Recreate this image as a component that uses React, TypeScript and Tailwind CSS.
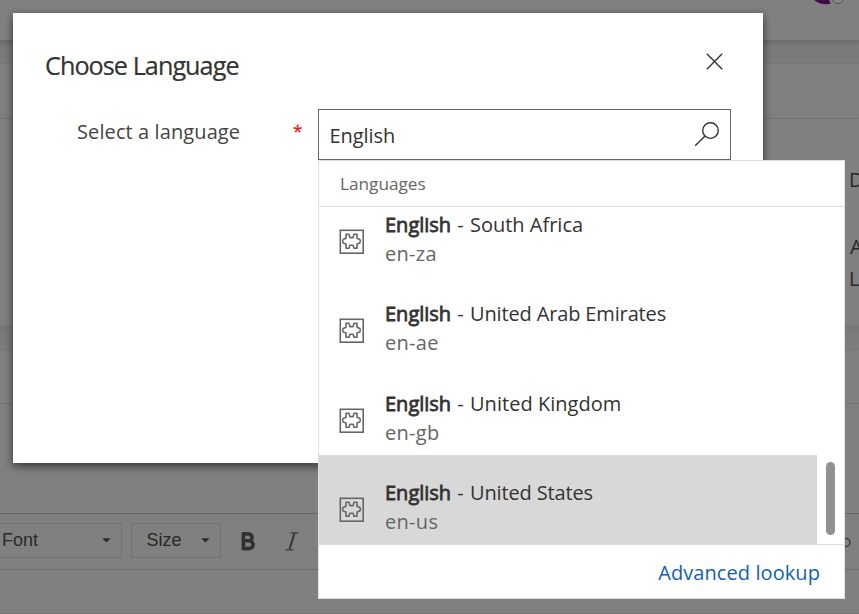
const languages = [
  { region: 'South Africa', code: 'en-za', tracking: '' },
  { region: 'United Arab Emirates', code: 'en-ae', tracking: 'tracking-[-0.14px]' },
  { region: 'United Kingdom', code: 'en-gb', tracking: 'tracking-[0.04px]' },
  { region: 'United States', code: 'en-us', tracking: 'tracking-[-0.14px]', selected: true },
];

function PuzzleIcon() {
  return (
    <svg className="mt-[42.6px] h-[25px] w-[25px] shrink-0" viewBox="0 0 25 25" fill="none" stroke="#666" strokeWidth="1.6">
      <rect x="1.3" y="1.3" width="22.9" height="22.9" />
      <path strokeLinejoin="round" d="M7 5.2H10L10.9 8.6H14.1L15 5.2H18V9.2L20.8 10.4Q22 12.2 20.8 14L18 15V19.3H15L14.1 16.2H10.9L10 19.3H7V15L4.2 14Q3 12.2 4.2 10.4L7 9.2Z" />
    </svg>
  );
}

function Caret() {
  return (
    <svg className="h-[5px] w-[9px]" viewBox="0 0 9 5" fill="#292929">
      <path d="M0.3 0.3H8.5L4.4 4.6Z" />
    </svg>
  );
}

function Backdrop() {
  return (
    <div className="flex h-full w-full flex-col bg-[#808080]">
      <div className="relative h-[41px] shrink-0 border-b border-[#717171] shadow-[0_2px_4px_rgba(0,0,0,0.12)]">
        <svg className="absolute right-0 top-0 h-[8px] w-[50px]" viewBox="0 0 50 8">
          <path d="M5 0C9 3.7 16 5 21.5 3.8L20 0Z" fill="#430849" />
          <circle cx="29" cy="-2" r="5.7" fill="#858585" stroke="#555" />
        </svg>
      </div>
      <div className="h-[23px] shrink-0 border-b border-[#777675] bg-gradient-to-b from-[#777] via-[#7c7b7a] via-30% to-[#7d7c7b]" />
      <div className="h-[55px] shrink-0 border-b border-[#757575]" />
      <div className="flex h-[208px] shrink-0 flex-col items-end border-b border-[#747474] pt-[46px] text-[20px] text-[#282828] shadow-[0_2px_4px_rgba(0,0,0,0.12)]">
        <div className="h-[67px] w-[10px] leading-[30px]">D</div>
        <div className="h-[32px] w-[9px] leading-[30px]">A</div>
        <div className="h-[32px] w-[10px] leading-[30px]">L</div>
      </div>
      <div className="h-[23px] shrink-0 border-b border-[#777] bg-gradient-to-b from-[#777] via-[#7c7b7b] via-30% to-[#7d7d7d]" />
      <div className="h-[54px] shrink-0 border-b border-[#747474]" />
      <div className="h-[110px] shrink-0 border-b border-[#666]" />
      <div className="flex h-[56px] shrink-0 items-start border-b border-[#6d6d6d] pt-[9px] font-['Liberation_Sans',Arial,sans-serif] text-[18px] text-[#292929]">
        <div className="flex h-[35px] w-[122px] items-center justify-between border border-l-0 border-[#707070] pl-[2px] pr-[10px]">
          <span className="-mt-[1px]">Font</span>
          <Caret />
        </div>
        <div className="ml-[9px] flex h-[35px] w-[90px] items-center justify-between border border-[#707070] pl-[14.5px] pr-[10px]">
          <span className="-mt-[1px]">Size</span>
          <Caret />
        </div>
        <svg className="ml-[20px] mt-[9px] h-[19px] w-[15px]" viewBox="0 0 15 19" fill="none" stroke="#303030" strokeWidth="3.6">
          <path d="M2.4 1.9H7.2C12.4 1.9 12.4 8.8 7.2 8.8H2.4M7.2 8.8C13.8 8.8 13.8 16.6 7.2 16.6H2.4M2.4 0.2V18.3" />
        </svg>
        <svg className="ml-[29px] mt-[9px] h-[19px] w-[14px]" viewBox="0 0 14 19" fill="none" stroke="#3c3c3c" strokeWidth="1.2">
          <path d="M5.5 0.8H13.4M0.6 17.8H8.4" />
          <path d="M9.4 1L4.5 17.6" strokeWidth="2.2" />
        </svg>
        <svg className="ml-auto mt-[14px] h-[12px] w-[16px]" viewBox="0 0 16 12" fill="none" stroke="#3c3c3c" strokeWidth="1.5">
          <circle cx="3" cy="5.5" r="4" />
        </svg>
      </div>
      <div className="h-[44px] shrink-0 border-b border-[#756f72]" />
    </div>
  );
}

function Lookup() {
  return (
    <div className="absolute left-[318px] top-[160px] flex h-[439px] w-[527px] flex-col border border-[#e0e0e0] bg-white">
      <div className="h-[46px] shrink-0 border-b border-[#dedede] pl-[21px] text-[17.2px] leading-[46px] text-[#666]">
        Languages
      </div>
      <div className="flex h-[338px] shrink-0 border-b border-[#dedede]">
        <div className="flex h-[337px] w-[498px] flex-col justify-end overflow-hidden">
          {languages.map((item) => (
            <div
              key={item.code}
              className={`flex h-[89.4px] shrink-0 pl-[20px] ${item.selected ? 'bg-[#d8d8d8]' : ''}`}
            >
              <PuzzleIcon />
              <div className="ml-[21px] mt-[23.6px] whitespace-nowrap text-[20px] leading-[29px]">
                <div className="text-[#333]">
                  <span className="[-webkit-text-stroke:0.8px_#333]">English</span>
                  <span className="ml-[1px] mr-[1px]"> - </span>
                  <span className={item.tracking}>{item.region}</span>
                </div>
                <div className="tracking-[0.3px] text-[#666]">{item.code}</div>
              </div>
            </div>
          ))}
        </div>
        <div className="ml-[9px] mt-[255px] h-[73px] w-[9px] rounded-full bg-[#919191]" />
      </div>
      <a className="mr-[24px] mt-[12px] self-end text-[20px] leading-[32px] tracking-[0.08px] text-[#1160b7]">Advanced lookup</a>
    </div>
  );
}

export default function App() {
  return (
    <div className="relative h-[614px] w-[859px] overflow-hidden font-['Open_Sans','Noto_Sans',sans-serif]">
      <Backdrop />
      <div className="absolute left-[13px] top-[13px] h-[450px] w-[750px] bg-white shadow-[0_3px_9px_rgba(0,0,0,0.6)]">
        <div className="flex h-[96px] justify-between pl-[32px] pr-[40px]">
          <h1 className="mt-[33px] text-[25.2px] leading-[38px] tracking-[-0.95px] text-[#333] [-webkit-text-stroke:0.2px_#333]">
            Choose Language
          </h1>
          <svg className="mt-[40px] h-[17px] w-[17px]" viewBox="0 0 17 17" stroke="#333" strokeWidth="1.4">
            <path d="M0.8 0.8L16.2 16.2M16.2 0.8L0.8 16.2" />
          </svg>
        </div>
        <div className="flex text-[20px]">
          <div className="w-[203px] whitespace-nowrap pl-[64px] leading-[46px] tracking-[0.1px] text-[#444]">Select a language</div>
          <div className="w-[102px] pl-[77px] text-[17px] leading-[44px] text-[#f01414] [-webkit-text-stroke:0.3px_#f01414]">*</div>
          <div className="flex h-[51px] w-[413px] items-center justify-between border border-[#666] pl-[10.5px] pr-[11px] text-[#333]">
            <span className="mt-[2px] tracking-[-0.05px]">English</span>
            <svg className="-mt-[1px] h-[25px] w-[25px]" viewBox="0 0 25 25" fill="none" stroke="#333" strokeWidth="1.4">
              <circle cx="16.5" cy="8.6" r="7.8" />
              <path d="M11 14.1L1.2 23.8" />
            </svg>
          </div>
        </div>
      </div>
      <Lookup />
    </div>
  );
}
